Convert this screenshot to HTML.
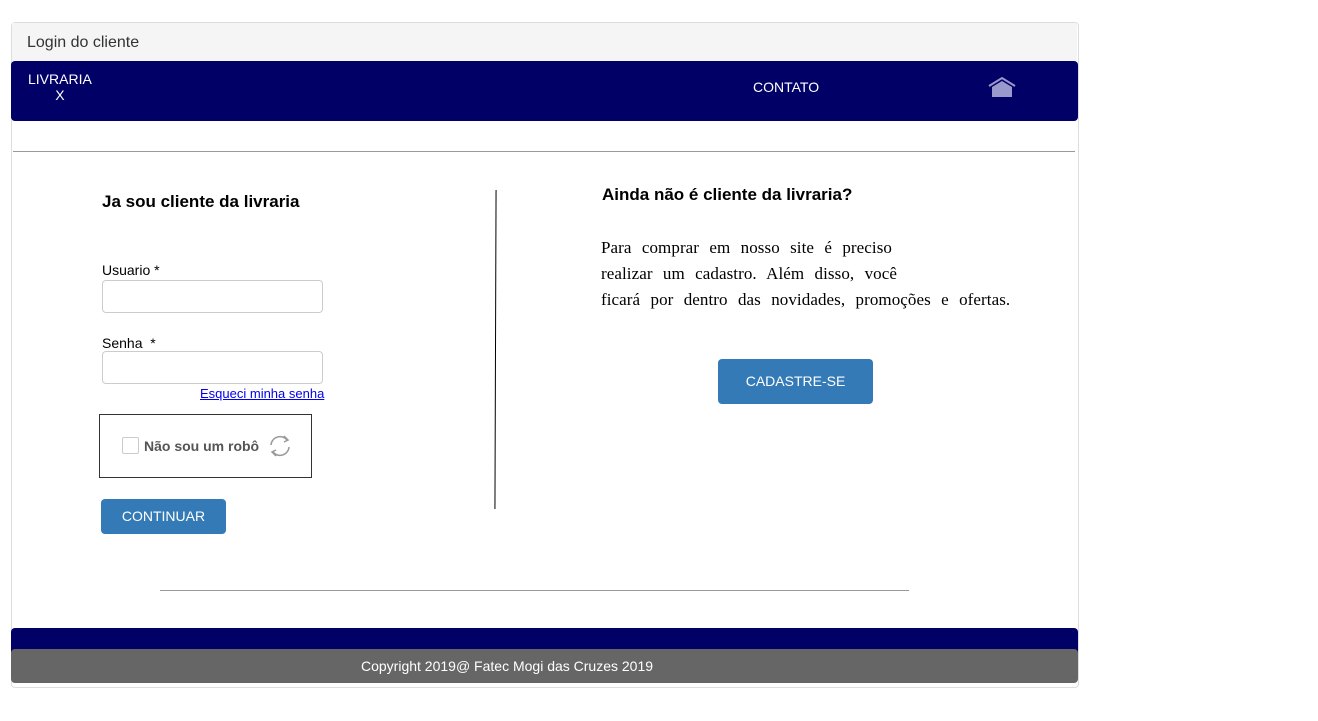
<!DOCTYPE html>
<html><head><meta charset="utf-8"><style>
body{margin:0;background:#fff;font-family:"Liberation Sans",sans-serif;width:1318px;height:721px;position:relative;overflow:hidden}
.a{position:absolute}
.panel{left:11px;top:22px;width:1066px;height:664px;border:1px solid #ddd;border-radius:4px}
.head{left:12px;top:23px;width:1065px;height:38px;background:#f5f5f5;color:#333;font-size:16px}
.nav{left:11px;top:61px;width:1067px;height:60px;background:#000066;border-radius:4px;color:#fff;font-size:14px}
input{position:absolute;width:221px;height:33px;border:1px solid #ccc;border-radius:4px;box-sizing:border-box;margin:0}
.btn{background:#337ab7;color:#fff;border-radius:4px;font-size:14px;text-align:center}
.p{font-family:"Liberation Serif",serif;font-size:17px;color:#000;word-spacing:6px;letter-spacing:0.08px;line-height:26px}
</style></head><body>
<div class="a panel"></div>
<div class="a head"><span class="a" style="left:15px;top:11px">Login do cliente</span></div>
<div class="a nav">
 <div class="a" style="left:17px;top:10px;text-align:center;line-height:16px">LIVRARIA<br>X</div>
 <div class="a" style="left:742px;top:18px">CONTATO</div>
 <svg class="a" style="left:976px;top:15px" width="30" height="22" viewBox="0 0 30 22"><path d="M2 10 L15 2 L28 10" fill="none" stroke="#9999cc" stroke-width="2"/><path d="M5 11 L15 5 L25 11 L25 21 L5 21Z" fill="#9999cc"/></svg>
</div>
<div class="a" style="left:13px;top:151px;width:1062px;height:1px;background:#999"></div>
<div class="a" style="left:102px;top:192px;font-size:17px;font-weight:bold">Ja sou cliente da livraria</div>
<div class="a" style="left:102px;top:262px;font-size:14px">Usuario *</div>
<input style="left:102px;top:280px">
<div class="a" style="left:102px;top:335px;font-size:14px">Senha&nbsp; *</div>
<input style="left:102px;top:351px">
<a class="a" style="left:200px;top:386px;font-size:13px;color:#0000ee;text-decoration:underline">Esqueci minha senha</a>
<div class="a" style="left:99px;top:414px;width:211px;height:62px;border:1px solid #333"></div>
<div class="a" style="left:122px;top:437px;width:15px;height:15px;border:1px solid #ccc;border-radius:2px"></div>
<div class="a" style="left:144px;top:438px;font-size:14px;font-weight:bold;color:#555">Não sou um robô</div>
<svg class="a" style="left:267px;top:433px" width="26" height="26" viewBox="0 0 26 26" fill="none" stroke="#999" stroke-width="1.5"><path d="M4 12 A9 9 0 0 1 20 7 M17 3 L21 7 L17 9"/><path d="M22 14 A9 9 0 0 1 6 19 M9 23 L5 19 L9 17"/></svg>
<div class="a btn" style="left:101px;top:499px;width:125px;height:35px;line-height:35px">CONTINUAR</div>
<div class="a" style="left:495px;top:190px;width:1px;height:319px;background:#000;transform:rotate(0.2deg)"></div>
<div class="a" style="left:602px;top:185px;font-size:17px;font-weight:bold">Ainda não é cliente da livraria?</div>
<div class="a p" style="left:601px;top:235px;width:440px">Para comprar em nosso site é preciso<br>realizar um cadastro. Além disso, você<br>ficará por dentro das novidades, promoções e ofertas.</div>
<div class="a btn" style="left:718px;top:359px;width:155px;height:45px;line-height:45px">CADASTRE-SE</div>
<div class="a" style="left:160px;top:590px;width:749px;height:1px;background:#999"></div>
<div class="a" style="left:11px;top:628px;width:1067px;height:28px;background:#000066;border-radius:4px 4px 0 0"></div>
<div class="a" style="left:11px;top:649px;width:1067px;height:34px;background:#666;border-radius:4px;color:#fff;font-size:14px"><span class="a" style="left:350px;top:9px">Copyright 2019@ Fatec Mogi das Cruzes 2019</span></div>
</body></html>
